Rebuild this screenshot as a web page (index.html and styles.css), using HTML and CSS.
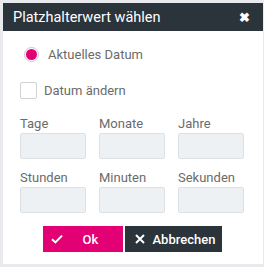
FILE: index.html
```html
<!DOCTYPE html>
<html>
<head lang="de">
    <meta charset="UTF-8">
    <title>Platzhalterwert wählen</title>
    <link rel="stylesheet" href="styles.css">
</head>
<body>
<div id="dialog">
    <div class="head">
        <span class="title">Platzhalterwert wählen</span>
        <span class="close">&#10006;</span>
    </div>
    <div class="body">
        <label class="choice">
            <span class="radio"><span class="dot"></span></span>
            <span>Aktuelles Datum</span>
        </label>
        <label class="choice second">
            <span class="check"></span>
            <span>Datum ändern</span>
        </label>
        <div class="fields">
            <div class="field"><span>Tage</span><div class="box"></div></div>
            <div class="field"><span>Monate</span><div class="box"></div></div>
            <div class="field"><span>Jahre</span><div class="box"></div></div>
        </div>
        <div class="fields">
            <div class="field"><span>Stunden</span><div class="box"></div></div>
            <div class="field"><span>Minuten</span><div class="box"></div></div>
            <div class="field"><span>Sekunden</span><div class="box"></div></div>
        </div>
        <div class="buttons">
            <span class="btn ok">
                <svg width="12" height="10" viewBox="0 0 12 10"><path d="M1 5.2 L4.4 8.4 L11 1.6" fill="none" stroke="#fff" stroke-width="2"/></svg>
                <b>Ok</b>
            </span>
            <span class="btn cancel">
                <svg width="10" height="10" viewBox="0 0 10 10"><path d="M1 1 L9 9 M9 1 L1 9" fill="none" stroke="#fff" stroke-width="2"/></svg>
                <b>Abbrechen</b>
            </span>
        </div>
    </div>
</div>
</body>
</html>
```

FILE: styles.css
```css
*{
    margin:0;
    padding:0;
    box-sizing:border-box;
}
body{
    background:#e8eaed;
    font-family:Roboto, "Liberation Sans", sans-serif;
    padding:3px 1px 3px 3px;
}
#dialog{
    background:#fff;
    height:261px;
}
.head{
    height:28px;
    background:#2b333b;
    color:#fff;
    display:flex;
    align-items:center;
    justify-content:space-between;
    padding:0 13px 0 10px;
}
.title{
    font-size:14.5px;
}
.close{
    font-size:13px;
    font-weight:bold;
}
.body{
    padding:13px 17px 0 17px;
}
.choice{
    display:flex;
    align-items:center;
    height:20px;
    font-size:13px;
    color:#6b6b6b;
}
.second{
    margin-top:16px;
}
.radio{
    width:15px;
    height:15px;
    border:1px solid #c8c8c8;
    border-radius:50%;
    margin:0 9px 0 4px;
    display:flex;
    align-items:center;
    justify-content:center;
}
.dot{
    width:11px;
    height:11px;
    border-radius:50%;
    background:#e20074;
}
.check{
    width:17px;
    height:17px;
    border:1px solid #d2d2d2;
    border-radius:2px;
    margin-right:7px;
}
.fields{
    display:flex;
    gap:13px;
    margin-top:16px;
}
.fields + .fields{
    margin-top:11px;
}
.field span{
    display:block;
    font-size:13px;
    line-height:16px;
    color:#6b6b6b;
    margin-bottom:1px;
}
.box{
    width:66px;
    height:26px;
    background:#eef1f4;
    border:1px solid #dde1e5;
    border-radius:2px;
}
.buttons{
    display:flex;
    justify-content:center;
    gap:2px;
    margin-top:13px;
    padding-right:2px;
}
.btn{
    height:26px;
    display:flex;
    align-items:center;
    color:#fff;
    font-size:13px;
}
.btn b{
    font-weight:500;
}
.ok{
    width:80px;
    background:#e20074;
    padding-left:8px;
}
.ok b{
    margin-left:20px;
}
.cancel{
    width:97px;
    background:#2b333b;
    padding-left:10px;
}
.cancel b{
    margin-left:8px;
}
```
